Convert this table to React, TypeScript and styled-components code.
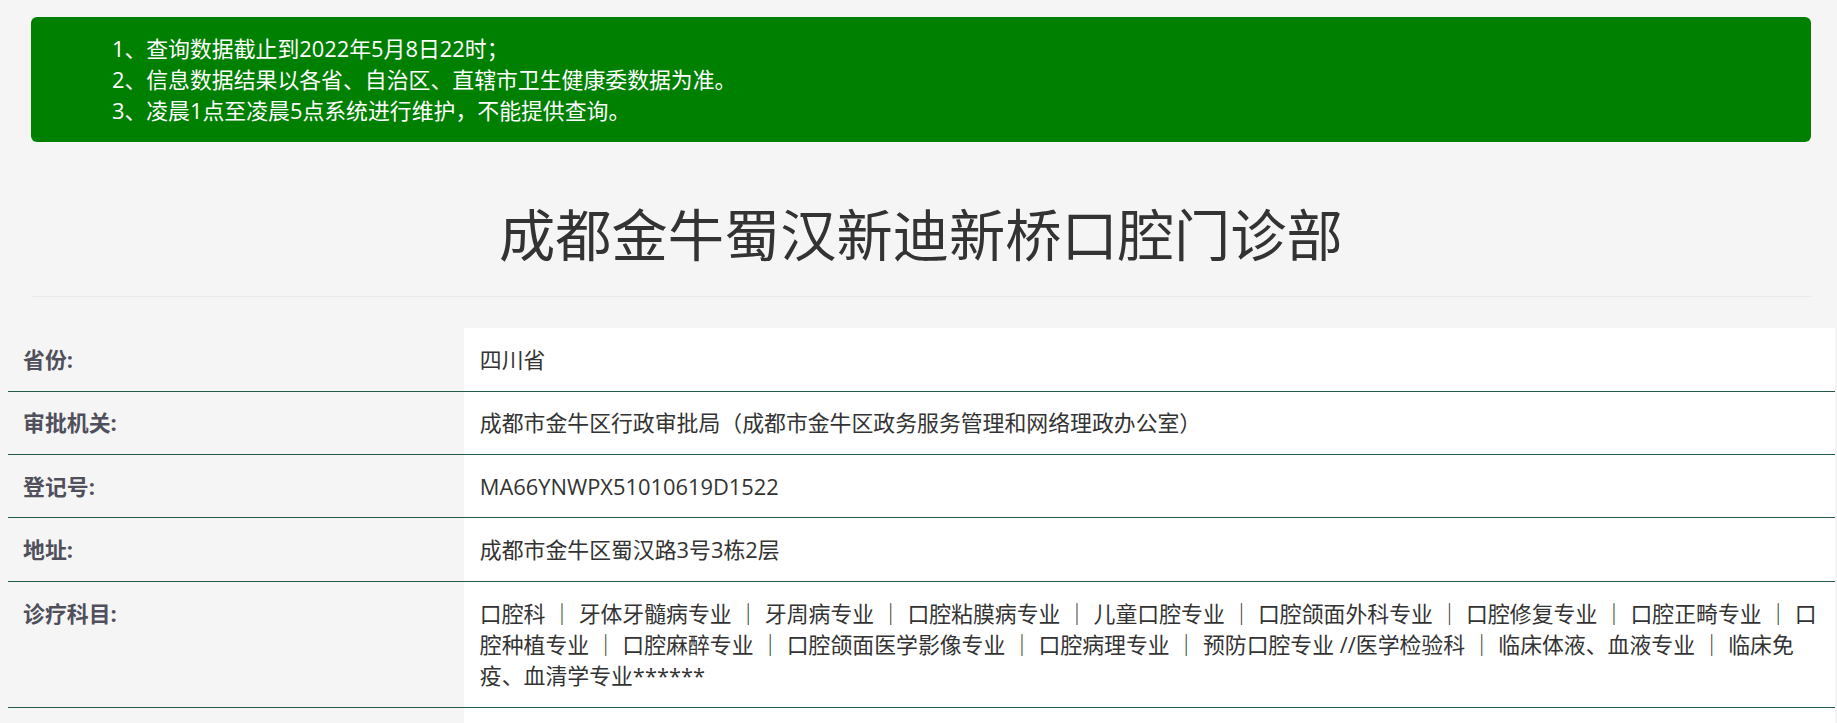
import React from "react";
import styled, { createGlobalStyle } from "styled-components";

const GlobalStyle = createGlobalStyle`
  html, body {
    margin: 0;
    padding: 0;
    background: #f5f5f5;
    overflow: hidden;
  }
  body {
    font-family: "Open Sans", "Noto Sans CJK SC", sans-serif;
    font-size: 21.875px;
    line-height: 31.25px;
    color: #333;
  }
`;

const Page = styled.div`
  width: 1827px;
  padding: 17px 0 0 7.5px;
`;

const Notice = styled.div`
  margin: 0 23.4px;
  padding: 15.6px 24px 15.6px 81px;
  background: #008000;
  color: #fff;
  border-radius: 6px;
  font-size: 21.875px;
  line-height: 31.25px;
`;

const NoticeLine = styled.div`
  white-space: nowrap;
`;

const Header = styled.div`
  margin: 62.5px 23.4px 31.25px;
  padding-bottom: 14px;
  border-bottom: 1.5px solid #eaeaea;
`;

const Title = styled.h1`
  margin: 0 0 15.6px;
  font-size: 56.25px;
  line-height: 1.1;
  font-weight: 400;
  color: #333;
  text-align: center;
`;

const Table = styled.table`
  width: 100%;
  border-collapse: collapse;
  border-spacing: 0;
`;

const Row = styled.tr`
  border-bottom: 1.5px solid #245c4c;
`;

const LabelCell = styled.td`
  width: 25%;
  padding: 15.6px;
  vertical-align: top;
  font-weight: 700;
  color: #50505c;
  white-space: nowrap;
`;

const ValueCell = styled.td`
  padding: 15.6px;
  vertical-align: top;
  background: #fff;
  color: #333;
  word-break: break-all;
`;

const notices = [
  "1、查询数据截止到2022年5月8日22时；",
  "2、信息数据结果以各省、自治区、直辖市卫生健康委数据为准。",
  "3、凌晨1点至凌晨5点系统进行维护，不能提供查询。",
];

const subjects = [
  "口腔科",
  "牙体牙髓病专业",
  "牙周病专业",
  "口腔粘膜病专业",
  "儿童口腔专业",
  "口腔颌面外科专业",
  "口腔修复专业",
  "口腔正畸专业",
  "口腔种植专业",
  "口腔麻醉专业",
  "口腔颌面医学影像专业",
  "口腔病理专业",
  "预防口腔专业 //医学检验科",
  "临床体液、血液专业",
  "临床免疫、血清学专业******",
];

const rows: { label: string; value: string }[] = [
  { label: "省份:", value: "四川省" },
  { label: "审批机关:", value: "成都市金牛区行政审批局（成都市金牛区政务服务管理和网络理政办公室）" },
  { label: "登记号:", value: "MA66YNWPX51010619D1522" },
  { label: "地址:", value: "成都市金牛区蜀汉路3号3栋2层" },
  { label: "诊疗科目:", value: subjects.join(" ｜ ") },
  { label: "\u00a0", value: "\u00a0" },
];

export default function App() {
  return (
    <>
      <GlobalStyle />
      <Page>
        <Notice>
          {notices.map((n) => (
            <NoticeLine key={n}>{n}</NoticeLine>
          ))}
        </Notice>
        <Header>
          <Title>成都金牛蜀汉新迪新桥口腔门诊部</Title>
        </Header>
        <Table>
          <tbody>
            {rows.map((r, i) => (
              <Row key={i}>
                <LabelCell>{r.label}</LabelCell>
                <ValueCell>{r.value}</ValueCell>
              </Row>
            ))}
          </tbody>
        </Table>
      </Page>
    </>
  );
}
